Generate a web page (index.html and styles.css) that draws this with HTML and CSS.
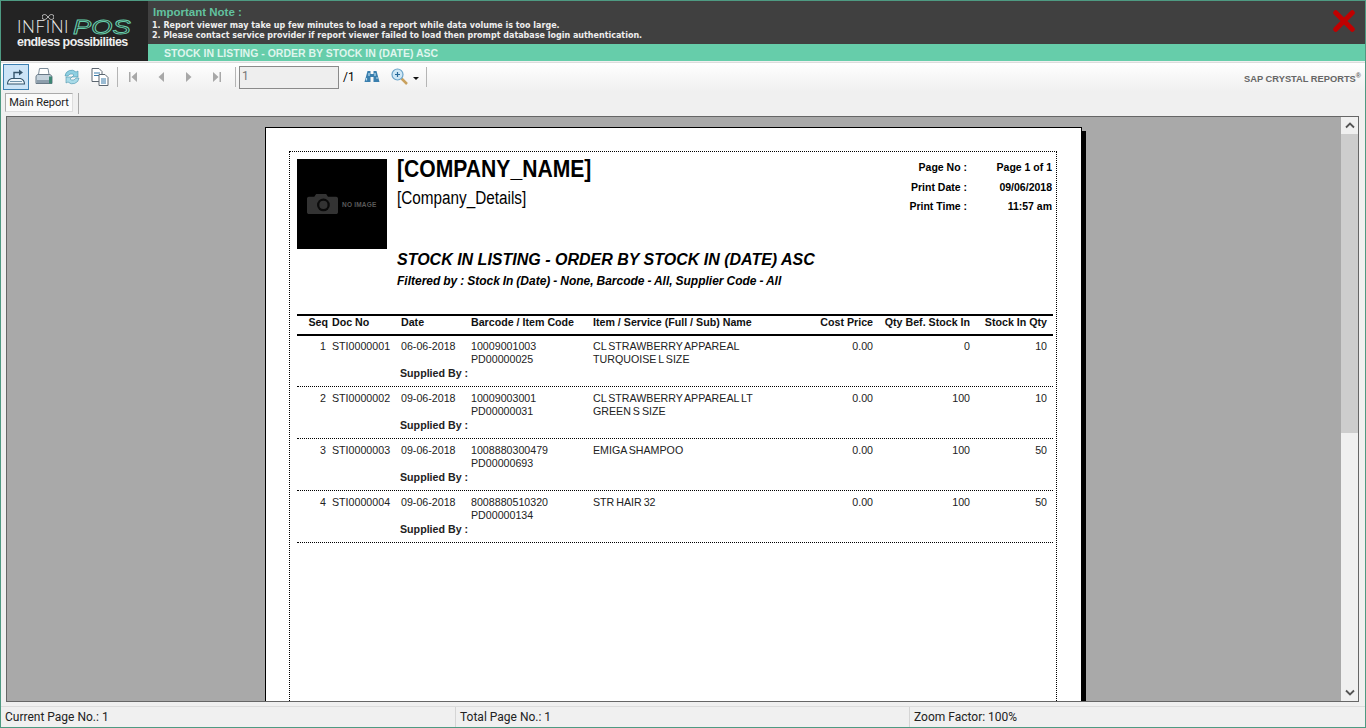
FILE: index.html
```html
<!DOCTYPE html>
<html lang="en">
<head>
    <meta charset="UTF-8">
    <title>Stock In Listing</title>
    <link rel="stylesheet" href="styles.css">
</head>
<body>
<div class="app">

    <header class="banner">
        <div class="logo">
            <div class="logo-top">
                <span class="logo-infini">INFINI</span><span class="logo-pos">POS</span>
                <svg class="logo-loop" width="12" height="6" viewBox="0 0 12 6"><path d="M6 3C4.500 1 3.500.5 2.500.5a2.500 2.500 0 0 0 0 5C3.500 5.500 4.500 5 6 3s2.500-2.500 3.500-2.500a2.500 2.500 0 0 1 0 5C8.500 5.500 7.500 5 6 3z" fill="none" stroke="#ddd" stroke-width=".8"/></svg>
            </div>
            <div class="logo-tag">endless possibilities</div>
        </div>
        <div class="banner-main">
            <div class="note">
                <div class="note-text">
                    <div class="note-title">Important Note :</div>
                    <div>1. Report viewer may take up few minutes to load a report while data volume is too large.</div>
                    <div>2. Please contact service provider if report viewer failed to load then prompt database login authentication.</div>
                </div>
                <svg class="close-x" width="22" height="22" viewBox="0 0 24 24"><path d="M3 3L21 21M21 3L3 21" stroke="#c00000" stroke-width="5.500" stroke-linecap="round"/></svg>
            </div>
            <div class="report-name">STOCK IN LISTING - ORDER BY STOCK IN (DATE) ASC</div>
        </div>
    </header>

    <div class="toolbar">
        <button class="tool active">
            <svg width="20" height="20" viewBox="0 0 20 20"><path d="M1.500 17c0-2.500 1.500-4.500 4-5.500h9c2.500 1 4 3 4 5.500z" fill="#eef6fb" stroke="#35556c" stroke-width="1.100"/><path d="M4 14.500h12" stroke="#6f93ab"/><path d="M8 11V5.500h6" fill="none" stroke="#35556c" stroke-width="1.400"/><path d="M13 2.500l4 3-4 3z" fill="#35556c"/></svg>
        </button>
        <button class="tool">
            <svg width="20" height="20" viewBox="0 0 20 20"><path d="M5.500 1.500h8.500l1 6H4.500z" fill="#fff" stroke="#7d8d9a"/><path d="M2 10c0-1.500 1-2.500 2-2.500h11c1.500 0 3 1 3 2.500v6.500H2z" fill="#c5d2dc" stroke="#6a7a87"/><path d="M3 13h12v3H3z" fill="#8d9eac"/><path d="M15 9.500h3v7h-3z" fill="#3d8573"/></svg>
        </button>
        <button class="tool">
            <svg width="20" height="20" viewBox="0 0 20 20"><path d="M3 9a6.500 6.500 0 0 1 11-4l2-1v6h-6l2-2a3.800 3.800 0 0 0-6 1z" fill="#8fd0e2" stroke="#4b93ad" stroke-width=".6"/><path d="M17 11a6.500 6.500 0 0 1-11 4l-2 1v-6h6l-2 2a3.800 3.800 0 0 0 6-1z" fill="#a9dbe8" stroke="#4b93ad" stroke-width=".6"/></svg>
        </button>
        <button class="tool">
            <svg width="20" height="20" viewBox="0 0 20 20"><path d="M2 1.500h7l3 3v10H2z" fill="#fff" stroke="#5c6670"/><path d="M4 6h6M4 8.500h6" stroke="#3778a8"/><path d="M9 7.500h6l3 3v8H9z" fill="#fff" stroke="#5c6670"/><path d="M11 12h5M11 14h5M11 16h5" stroke="#3778a8"/></svg>
        </button>
        <span class="sep"></span>
        <button class="tool"><svg width="10" height="12" viewBox="0 0 10 12"><path d="M1 1h1.500v10H1zM9 1v10L3.500 6z" fill="#a8a8a8"/></svg></button>
        <button class="tool"><svg width="10" height="12" viewBox="0 0 10 12"><path d="M8 1v10L2.500 6z" fill="#a8a8a8"/></svg></button>
        <button class="tool"><svg width="10" height="12" viewBox="0 0 10 12"><path d="M2 1v10L7.500 6z" fill="#a8a8a8"/></svg></button>
        <button class="tool last-nav"><svg width="10" height="12" viewBox="0 0 10 12"><path d="M1 1v10L6.500 6zM7.500 1H9v10H7.500z" fill="#a8a8a8"/></svg></button>
        <span class="sep"></span>
        <input class="page-input" value="1" disabled>
        <span class="page-total">/1</span>
        <button class="tool">
            <svg width="16" height="16" viewBox="0 0 16 16"><path d="M3.500 2h3v3h3V2h3l3 11h-6V8h-3v5H.500z" fill="#3a7fae"/><path d="M2.500 9v2.500M5 4v3M11 4v3M12 9h2" stroke="#b8dcf0" stroke-width="1.200"/></svg>
        </button>
        <button class="tool zoom-btn">
            <svg width="20" height="20" viewBox="0 0 20 20"><path d="M11.500 11.500L17 17" stroke="#c9a15e" stroke-width="2.500"/><circle cx="7.500" cy="7.500" r="5.500" fill="#cfe7f5" stroke="#6ba4c9" stroke-width="1.200"/><path d="M5 7.500h5M7.500 5v5" stroke="#2a6a99" stroke-width="1.200"/></svg>
            <span class="caret"></span>
        </button>
        <span class="sep"></span>
        <span class="brand">SAP CRYSTAL REPORTS<sup>®</sup></span>
    </div>

    <div class="tabs">
        <div class="tab">Main Report</div>
        <span class="tab-sep"></span>
    </div>

    <div class="viewer">
        <div class="canvas">
            <div class="page">
                <div class="page-box">

                    <div class="rep-head">
                        <div class="no-image">
                            <svg width="31" height="22" viewBox="0 0 34 24"><path d="M2 4h6l2-3h11l2 3h9c1 0 2 1 2 2v15c0 1-1 2-2 2H2c-1 0-2-1-2-2V6c0-1 1-2 2-2z" fill="#333"/><circle cx="18" cy="13" r="7" fill="#0a0a0a"/><circle cx="18" cy="13" r="4.500" fill="#333"/></svg>
                            <span>NO IMAGE</span>
                        </div>
                        <div class="rep-titles">
                            <div class="company-name">[COMPANY_NAME]</div>
                            <div class="company-details">[Company_Details]</div>
                            <div class="rep-title">STOCK IN LISTING - ORDER BY STOCK IN (DATE) ASC</div>
                            <div class="rep-filter">Filtered by : Stock In (Date) - None, Barcode - All, Supplier Code - All</div>
                        </div>
                        <div class="rep-meta">
                            <span>Page No :</span><span>Page 1 of 1</span>
                            <span>Print Date :</span><span>09/06/2018</span>
                            <span>Print Time :</span><span>11:57 am</span>
                        </div>
                    </div>

                    <div class="row row-head">
                        <div class="num">Seq</div>
                        <div>Doc No</div>
                        <div>Date</div>
                        <div>Barcode / Item Code</div>
                        <div>Item / Service (Full / Sub) Name</div>
                        <div class="num">Cost Price</div>
                        <div class="num">Qty Bef. Stock In</div>
                        <div class="num">Stock In Qty</div>
                    </div>

                    <div class="row">
                        <div class="num">1</div>
                        <div>STI0000001</div>
                        <div>06-06-2018</div>
                        <div>10009001003<br>PD00000025</div>
                        <div>CL STRAWBERRY APPAREAL<br>TURQUOISE L SIZE</div>
                        <div class="num">0.00</div>
                        <div class="num">0</div>
                        <div class="num">10</div>
                        <div class="supplied">Supplied By :</div>
                    </div>
                    <div class="row">
                        <div class="num">2</div>
                        <div>STI0000002</div>
                        <div>09-06-2018</div>
                        <div>10009003001<br>PD00000031</div>
                        <div>CL STRAWBERRY APPAREAL LT<br>GREEN S SIZE</div>
                        <div class="num">0.00</div>
                        <div class="num">100</div>
                        <div class="num">10</div>
                        <div class="supplied">Supplied By :</div>
                    </div>
                    <div class="row">
                        <div class="num">3</div>
                        <div>STI0000003</div>
                        <div>09-06-2018</div>
                        <div>1008880300479<br>PD00000693</div>
                        <div>EMIGA SHAMPOO</div>
                        <div class="num">0.00</div>
                        <div class="num">100</div>
                        <div class="num">50</div>
                        <div class="supplied">Supplied By :</div>
                    </div>
                    <div class="row">
                        <div class="num">4</div>
                        <div>STI0000004</div>
                        <div>09-06-2018</div>
                        <div>8008880510320<br>PD00000134</div>
                        <div>STR HAIR 32</div>
                        <div class="num">0.00</div>
                        <div class="num">100</div>
                        <div class="num">50</div>
                        <div class="supplied">Supplied By :</div>
                    </div>

                </div>
            </div>
        </div>
        <div class="scrollbar">
            <svg width="10" height="7" viewBox="0 0 10 7"><path d="M1 5.500L5 1.500L9 5.500" fill="none" stroke="#555" stroke-width="1.800"/></svg>
            <div class="scroll-track"><div class="scroll-thumb"></div></div>
            <svg width="10" height="7" viewBox="0 0 10 7"><path d="M1 1.500L5 5.500L9 1.500" fill="none" stroke="#555" stroke-width="1.800"/></svg>
        </div>
    </div>

    <footer class="status">
        <div class="status-cell first">Current Page No.: 1</div>
        <div class="status-cell second">Total Page No.: 1</div>
        <div class="status-cell">Zoom Factor: 100%</div>
    </footer>

</div>
</body>
</html>
```

FILE: styles.css
```css
/* window */
html, body {
    margin: 0;
    height: 100%;
    overflow: hidden;
}
body {
    font-family: "Liberation Sans", Arial, sans-serif;
    color: #000;
}
.app {
    box-sizing: border-box;
    width: 1366px;
    height: 728px;
    border: 1px solid #4e9a82;
    background-color: #f0f0f0;
    display: flex;
    flex-direction: column;
}

/* top banner */
.banner {
    display: flex;
    height: 60px;
    flex-shrink: 0;
}
.logo {
    width: 147px;
    background-color: #232323;
    color: #e8e8e8;
    padding: 16px 0 0 16px;
    box-sizing: border-box;
}
.logo-top {
    position: relative;
    display: flex;
    align-items: center;
    height: 18px;
}
.logo-infini {
    font-family: Lato, sans-serif;
    font-size: 17px;
    font-weight: 300;
    line-height: 17px;
    letter-spacing: .6px;
    width: 56px;
    color: #eee;
}
.logo-pos {
    font-size: 21px;
    font-style: italic;
    line-height: 17px;
    color: transparent;
    -webkit-text-stroke: .9px #66cdaa;
    transform: scaleX(1.3);
    transform-origin: left;
}
.logo-loop {
    position: absolute;
    left: 25px;
    top: -3px;
}
.logo-tag {
    font-size: 12.500px;
    font-weight: 700;
    letter-spacing: -.55px;
    line-height: 12px;
    margin-top: 1px;
    color: #eee;
}
.banner-main {
    flex: 1;
    display: flex;
    flex-direction: column;
}
.note {
    flex: 1;
    background-color: #404040;
    display: flex;
    justify-content: space-between;
    padding: 3px 10px 0 4px;
}
.note-text {
    font-family: "DejaVu Sans", sans-serif;
    font-size: 8px;
    font-weight: 700;
    line-height: 10.500px;
    color: #eee;
}
.note-title {
    font-family: "Liberation Sans", sans-serif;
    font-size: 11.500px;
    line-height: 16.500px;
    padding-left: 1px;
    color: #62c29f;
}
.close-x {
    margin-top: 6px;
}
.report-name {
    height: 17px;
    line-height: 18px;
    background-color: #66cdaa;
    color: #dff5ed;
    font-size: 10.500px;
    font-weight: 700;
    padding-left: 16px;
}

/* toolbar */
.toolbar {
    display: flex;
    align-items: center;
    height: 29px;
    box-sizing: border-box;
    flex-shrink: 0;
    margin-top: 1px;
    padding-left: 1px;
    background: linear-gradient(#ffffff, #f0f0f0);
    border-top: 1px solid #ddd;
}
.tool {
    width: 28px;
    height: 26px;
    padding: 0;
    border: 1px solid transparent;
    background: none;
    display: flex;
    align-items: center;
    justify-content: center;
}
.tool.active {
    background-color: #cce4f7;
    border-color: #3c7fb1;
    width: 26px;
    margin: 0 1px;
}
.last-nav {
    margin-right: 1px;
}
.sep {
    width: 1px;
    height: 20px;
    background-color: #b5b5b5;
    margin: 0 1px 0 3px;
}
.page-input {
    box-sizing: border-box;
    width: 100px;
    height: 23px;
    margin-left: 2px;
    padding: 0 2px 3px;
    border: 1px solid #8a8a8a;
    background-color: #eeeeee;
    font-family: Roboto, sans-serif;
    font-size: 12px;
    color: #777;
}
.page-total {
    font-family: Roboto, sans-serif;
    font-size: 12px;
    margin: 0 4px;
    width: 11px;
}
.zoom-btn {
    width: 37px;
    gap: 3px;
}
.caret {
    width: 0;
    height: 0;
    border-left: 3px solid transparent;
    border-right: 3px solid transparent;
    border-top: 3px solid #111;
    margin-top: 3px;
}
.brand {
    margin-left: auto;
    margin-right: 4px;
    margin-top: 4px;
    font-size: 9.300px;
    font-weight: 700;
    color: #666;
}
.brand sup {
    font-size: 7px;
    line-height: 0;
}

/* tab strip */
.tabs {
    display: flex;
    align-items: flex-start;
    height: 24px;
    flex-shrink: 0;
    padding: 2px 0 0 4px;
    box-sizing: border-box;
}
.tab {
    box-sizing: border-box;
    width: 68px;
    height: 19px;
    line-height: 17px;
    text-align: center;
    background-color: #fafafa;
    border: 1px solid #aaa;
    border-bottom-color: #ddd;
    border-right-color: #ddd;
    font-family: Roboto, sans-serif;
    font-size: 11px;
    color: #222;
}
.tab-sep {
    width: 1px;
    height: 21px;
    margin-left: 5px;
    background-color: #aaa;
}

/* report area */
.viewer {
    flex: 1;
    min-height: 0;
    display: flex;
    margin: 1px 6px 0 5px;
    border: 1px solid #666;
}
.canvas {
    flex: 1;
    min-width: 0;
    overflow: hidden;
    background-color: #a9a9a9;
    padding: 10px 0 0 258px;
}
.page {
    box-sizing: border-box;
    width: 817px;
    height: 900px;
    background-color: #fff;
    border: 1px solid #000;
    box-shadow: 4px 4px 0 #000;
    padding: 23px 23px;
}
.page-box {
    box-sizing: border-box;
    width: 768px;
    height: 860px;
    border: 1px dotted #000;
    padding: 7px 3px 0 7px;
}
.rep-head {
    display: flex;
    height: 155px;
}
.no-image {
    box-sizing: border-box;
    width: 90px;
    height: 90px;
    background-color: #000;
    display: flex;
    align-items: center;
    gap: 4px;
    padding-left: 10px;
    flex-shrink: 0;
    font-size: 6.500px;
    font-weight: 700;
    letter-spacing: .2px;
    color: #5a5a5a;
    white-space: nowrap;
}
.rep-titles {
    margin-left: 10px;
    margin-top: -1px;
    width: 470px;
    white-space: nowrap;
}
.company-name {
    font-size: 24px;
    font-weight: 700;
    line-height: 22px;
    transform: scaleX(.88);
    transform-origin: left;
}
.company-details {
    font-size: 18px;
    line-height: 20px;
    margin-top: 8px;
    transform: scaleX(.85);
    transform-origin: left;
}
.rep-title {
    font-size: 16px;
    font-weight: 700;
    font-style: italic;
    line-height: 18px;
    margin-top: 43px;
}
.rep-filter {
    font-size: 12px;
    font-weight: 700;
    font-style: italic;
    line-height: 14px;
    margin-top: 5px;
    word-spacing: -.4px;
}
.rep-meta {
    display: grid;
    grid-template-columns: 90px 85px;
    grid-auto-rows: 19.500px;
    font-size: 10.500px;
    font-weight: 700;
    text-align: right;
    padding-top: 2px;
    margin-left: 10px;
    white-space: nowrap;
}

/* table rows */
.row {
    display: grid;
    grid-template-columns: 35px 69px 70px 122px 201px 79px 97px 77px;
    grid-template-rows: 27px 13px;
    width: 756px;
    height: 52px;
    box-sizing: border-box;
    padding-top: 5px;
    font-size: 10.670px;
    word-spacing: -1px;
    line-height: 13px;
    color: #222;
    border-bottom: 1px dotted #000;
    white-space: nowrap;
}
.row-head {
    height: 22px;
    padding-top: 0;
    margin-bottom: -1px;
    line-height: 13px;
    font-weight: 700;
    color: #111;
    border-top: 2px solid #000;
    border-bottom: 2px solid #000;
    grid-template-rows: auto;
    word-spacing: 0;
    align-items: start;
}
.num {
    text-align: right;
}
.row > .num:first-child {
    padding-right: 6px;
}
.row-head > .num:first-child {
    padding-right: 4px;
}
.supplied {
    grid-column: 3 / 6;
    font-weight: 700;
    margin-left: -1px;
    word-spacing: 0;
}

/* scrollbar */
.scrollbar {
    width: 17px;
    flex-shrink: 0;
    background-color: #f0f0f0;
    display: flex;
    flex-direction: column;
    align-items: center;
    padding: 5px 0;
    box-sizing: border-box;
    gap: 5px;
}
.scroll-track {
    flex: 1;
    width: 100%;
}
.scroll-thumb {
    height: 299px;
    background-color: #cdcdcd;
}

/* status bar */
.status {
    display: flex;
    height: 21px;
    box-sizing: border-box;
    flex-shrink: 0;
    margin-top: 4px;
    border-top: 1px solid #dcdcdc;
    font-family: Roboto, sans-serif;
    font-size: 12px;
    line-height: 21px;
    color: #222;
}
.status-cell {
    padding-left: 4px;
}
.status-cell.first {
    width: 450px;
    border-right: 1px solid #d5d5d5;
}
.status-cell.second {
    width: 449px;
    border-right: 1px solid #d5d5d5;
}
```
